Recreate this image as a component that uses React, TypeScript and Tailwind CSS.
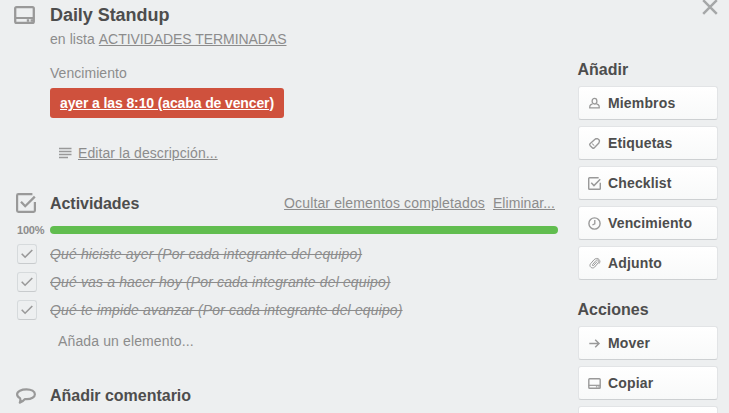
import type { ReactNode } from 'react';

type IconProps = { className?: string };

const CardIcon = ({ className = '' }: IconProps) => (
  <svg viewBox="0 0 21 18" fill="none" stroke="currentColor" strokeWidth="2.3" className={className}>
    <rect x="1.2" y="1.2" width="18.6" height="15.6" rx="1.4" />
    <path d="M1 12h19" strokeWidth="2" />
    <path d="M12.8 14.5h2.4M16.6 14.5h2.4" strokeWidth="2.4" />
  </svg>
);

const ChecklistIcon = ({ className = '' }: IconProps) => (
  <svg viewBox="0 0 20 20" fill="none" stroke="currentColor" strokeWidth="2.2" className={className}>
    <path d="M16.4 1.1H2.4Q1.1 1.1 1.1 2.4V17.6Q1.1 18.9 2.4 18.9H17.6Q18.9 18.9 18.9 17.6V9" />
    <path d="M5 8.8l4.2 4.4L18.8 3.6" strokeWidth="2.3" />
  </svg>
);

const CommentIcon = ({ className = '' }: IconProps) => (
  <svg viewBox="0 0 20 16" fill="none" stroke="currentColor" strokeWidth="2.2" strokeLinejoin="round" className={className}>
    <path d="M10.5 1.3C15.4 1.3 18.9 3.3 18.9 6.2S15.4 11.2 10.8 11.2Q9.8 11.2 8.8 11.1Q7 13.6 3.8 14.6Q4.9 12.3 4 10.1C2.1 9.1 1.1 7.8 1.1 6.2C1.1 3.3 5.4 1.3 10.5 1.3Z" />
  </svg>
);

const MemberIcon = () => (
  <svg viewBox="0 0 13 13" fill="none" stroke="currentColor" strokeWidth="1.3" strokeLinejoin="round" className="size-[13px]">
    <ellipse cx="6.5" cy="4.2" rx="2.4" ry="2.8" />
    <path d="M4.6 6.8L2.6 7.9Q1.7 8.5 1.7 10.9H11.3Q11.3 8.5 10.4 7.9L8.4 6.8" />
  </svg>
);

const LabelIcon = () => (
  <svg viewBox="0 0 13 13" fill="none" stroke="currentColor" strokeWidth="1.4" strokeLinejoin="round" className="size-[13px]">
    <path d="M7 2.3Q7.4 1.9 8 1.8L9.4 1.7Q10 1.7 10.3 2.1L11.3 3.3Q11.6 3.8 11.4 4.4L10.9 5.9L6.1 10.9Q5.3 11.6 4.5 10.9L2 8.4Q1.3 7.6 2 6.8Z" />
    <path d="M4 6.8Q5.8 7 6 8.8" strokeWidth="1" />
  </svg>
);

const ClockIcon = () => (
  <svg viewBox="0 0 13 13" fill="none" stroke="currentColor" strokeWidth="1.4" className="size-[13px]">
    <circle cx="6.5" cy="6.5" r="5.6" />
    <path d="M6.8 3V6.8L4.4 8" strokeWidth="1.3" />
  </svg>
);

const ClipIcon = () => (
  <svg viewBox="0 0 13 13" fill="none" stroke="currentColor" strokeWidth="1" strokeLinecap="round" className="size-[13px]">
    <path d="M8.9 4.8L5.7 8.4C4.9 9.2 3.9 8.3 4.6 7.5L8.1 3.4C9.5 2 11.7 3.9 10.4 5.6L6.6 10.1C4.3 12.5.5 9.4 2.5 6.8L6.1 2.7C7.3 1.4 9.6.8 11 2.4S12 5.4 11.2 6.4" />
  </svg>
);

const ArrowIcon = () => (
  <svg viewBox="0 0 13 13" fill="none" stroke="currentColor" strokeWidth="1.5" className="size-[13px]">
    <path d="M1.3 6.5h9.5M7.2 2.7L11 6.5L7.2 10.3" />
  </svg>
);

const ArchiveIcon = () => (
  <svg viewBox="0 0 12 12" fill="none" stroke="currentColor" strokeWidth="1.2" className="size-3">
    <path d="M1 1h10v3H1zM2 4v7h8V4" />
  </svg>
);

const SideButton = ({ icon, label }: { icon: ReactNode; label: string }) => (
  <button className="flex h-[34px] w-[140px] shrink-0 items-center rounded-[3px] border border-[#e2e4e6] border-b-[#cdd0d2] bg-linear-to-b from-white to-[#f8f9f9] pl-[9px] text-left text-sm font-bold tracking-[0.15px]">
    <span className="flex w-[20px] items-center text-[#999]">{icon}</span>
    {label}
  </button>
);

const items = [
  'Qué hiciste ayer (Por cada integrante del equipo)',
  'Qué vas a hacer hoy (Por cada integrante del equipo)',
  'Qué te impide avanzar (Por cada integrante del equipo)',
];

export default function App() {
  return (
    <div className="flex h-[413px] w-[729px] overflow-hidden bg-[#edeff0] font-['Liberation_Sans',Arial,sans-serif] text-sm text-[#4d4d4d]">
      <main className="w-[558px] shrink-0">
        <header className="flex h-[64px] pl-[14px] pt-[5px]">
          <CardIcon className="mt-[1px] h-[18px] w-[21px] text-[#999]" />
          <div className="ml-[15px]">
            <h1 className="text-lg leading-5 font-bold tracking-[-0.05px]">Daily Standup</h1>
            <p className="mt-1 leading-5 text-[#8c8c8c]">
              <span className="tracking-[0.06px]">en lista </span>
              <a className="tracking-[-0.05px] underline">ACTIVIDADES TERMINADAS</a>
            </p>
          </div>
        </header>

        <section className="h-[125px] pl-[50px] text-[#8c8c8c]">
          <h2 className="h-6 leading-[18px] tracking-[0.05px]">Vencimiento</h2>
          <a className="flex h-[30px] w-[234px] items-center justify-center rounded-[3px] bg-[#cf513d] font-bold text-white underline">
            <span className="whitespace-nowrap tracking-[-0.12px]">ayer a las 8:10 (acaba de vencer)</span>
          </a>
          <div className="mt-[25px] flex h-5 items-center pl-[9px]">
            <svg viewBox="0 0 13 12" stroke="currentColor" strokeWidth="1.4" className="mr-[6px] h-[12px] w-[13px] text-[#999]">
              <path d="M0 1.5h12.5M0 4.5h12.5M0 7.5h12.5M0 10.5h9" />
            </svg>
            <a className="tracking-[0.08px] underline">Editar la descripción...</a>
          </div>
        </section>

        <section className="h-[195px]">
          <div className="flex h-[29px] items-center pl-4">
            <ChecklistIcon className="mt-[-1px] size-5 text-[#999]" />
            <h2 className="ml-[14px] text-base font-bold tracking-[-0.05px]">Actividades</h2>
            <div className="ml-auto flex gap-2 pr-[3px] pb-[2px] text-[#8c8c8c]">
              <a className="tracking-[0.14px] underline">Ocultar elementos completados</a>
              <a className="tracking-[0.05px] underline">Eliminar...</a>
            </div>
          </div>
          <div className="flex h-[24px] items-center">
            <span className="w-[50px] pt-px pl-[17px] text-[11px] font-bold tracking-[-0.2px] text-[#8c8c8c]">100%</span>
            <div className="h-2 w-[508px] rounded-full bg-[#61bd4f]" />
          </div>
          <ul>
            {items.map((item) => (
              <li key={item} className="flex h-7 items-center pl-[17px]">
                <span className="mt-[-4px] flex size-5 items-center justify-center rounded-[3px] border border-[#d6dadc] border-b-[#c8cbcd] text-[#999]">
                  <svg viewBox="0 0 12 10" fill="none" stroke="currentColor" strokeWidth="1.6" className="h-[10px] w-3">
                    <path d="M.7 4.7l3.4 3.5L11.3 1" />
                  </svg>
                </span>
                <span className="mt-[-4px] ml-[13px] leading-5 tracking-[0.145px] text-[#8c8c8c] italic line-through">{item}</span>
              </li>
            ))}
          </ul>
          <p className="pt-[5px] pl-[58px] leading-5 tracking-[0.13px] text-[#8c8c8c]">Añada un elemento...</p>
        </section>

        <div className="flex h-[24px] items-center pl-4">
          <CommentIcon className="h-4 w-5 text-[#999]" />
          <h2 className="ml-[14px] text-base font-bold tracking-[-0.02px]">Añadir comentario</h2>
        </div>
      </main>

      <aside className="w-[171px] shrink-0 pl-5">
        <div className="flex h-[56px] justify-end pr-[11px]">
          <svg viewBox="0 0 16 16" stroke="#a5a7a8" strokeWidth="2.5" className="mt-[-1px] size-4">
            <path d="M1.2 1.2l13.6 13.6M14.8 1.2L1.2 14.8" />
          </svg>
        </div>
        <h2 className="ml-[-0.5px] h-[30px] text-base leading-[27px] font-bold">Añadir</h2>
        <div className="flex h-[210px] flex-col gap-1.5">
          <SideButton icon={<MemberIcon />} label="Miembros" />
          <SideButton icon={<LabelIcon />} label="Etiquetas" />
          <SideButton icon={<ChecklistIcon className="size-[13px]" />} label="Checklist" />
          <SideButton icon={<ClockIcon />} label="Vencimiento" />
          <SideButton icon={<ClipIcon />} label="Adjunto" />
        </div>
        <h2 className="ml-[-0.5px] h-[30px] text-base leading-[27px] font-bold">Acciones</h2>
        <div className="flex flex-col gap-1.5">
          <SideButton icon={<ArrowIcon />} label="Mover" />
          <SideButton icon={<CardIcon className="h-[11px] w-[13px]" />} label="Copiar" />
          <SideButton icon={<ArchiveIcon />} label="" />
        </div>
      </aside>
    </div>
  );
}
